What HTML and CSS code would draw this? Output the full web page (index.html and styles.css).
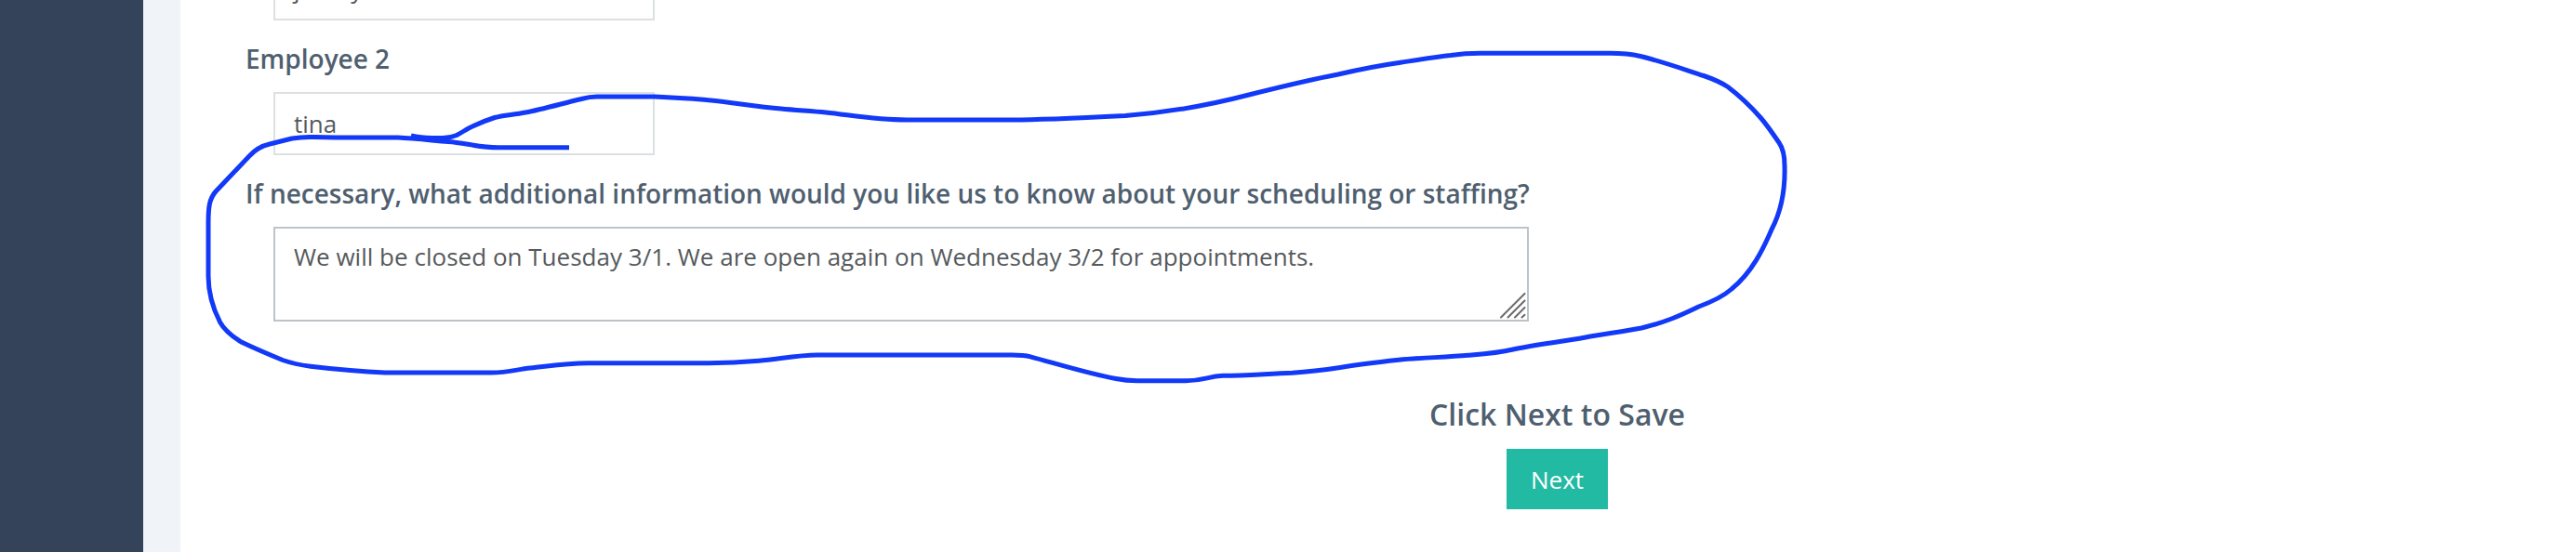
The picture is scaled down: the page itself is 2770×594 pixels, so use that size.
FILE: index.html
```html
<!DOCTYPE html>
<html lang="en">
<head>
<meta charset="utf-8">
<title>Scheduling and staffing</title>
<link rel="stylesheet" href="styles.css">
</head>
<body>
<div class="app">
  <aside class="sidebar"></aside>
  <main class="content">
    <form class="form">
      <div class="field">
        <div class="input">jimmy</div>
      </div>
      <div class="field">
        <label class="label">Employee 2</label>
        <div class="input">tina</div>
      </div>
      <div class="field">
        <label class="label">If necessary, what additional information would you like us to know about your scheduling or staffing?</label>
        <div class="textarea">We will be closed on Tuesday 3/1. We are open again on Wednesday 3/2 for appointments.
          <svg class="grip" viewBox="0 0 28 28"><path d="M1 26.5 26.5 1M8.5 26.5 26.5 8.5M16 26.5 26.5 16M23.5 26.5 26.5 23.8"/></svg>
        </div>
      </div>
    </form>
    <div class="actions">
      <h2 class="hint">Click Next to Save</h2>
      <button class="next" type="button">Next</button>
    </div>
  </main>
</div>
<svg class="ink" viewBox="0 0 2770 594">
  <path d="M442 146C450 148 457 148.500 465 148.500H476Q484 148.500 491 145.500C497 142.500 500 140 504 138C516 132 524 129 532 126.500C541 124 552 123.500 565 121C582 118 604 111.500 625 106.500Q634 104 642 104H704L740 106C772 107.500 806 114 840 117C856 118.500 872 119.500 888 121C916 124 942 129 975 129H1090C1120 129 1180 126 1210 124.500C1250 121.500 1297 114 1343 102C1375 94 1407 86 1439 80C1461 75 1480 71 1506 67.300C1524 64.500 1542 61.500 1560 59.500Q1575 57.300 1592 57.300H1731Q1750 57.300 1764 60.500C1787 66 1812 75 1832 81.500Q1848 87 1858 93.500C1873 105 1884 116 1893.500 127C1902 137 1907 145 1913 153.500Q1919 162 1919 178C1920 210 1914 230 1905 247C1896 268 1884 293 1862 311C1853 319 1840 325 1826.600 330C1806 340 1790 347 1765 353C1745 357 1722 359.500 1705 363C1678 368 1650 371 1627 376C1610 380 1595 381 1579 382.300C1554 384.500 1526 385 1504 387.300C1484 389.500 1462 392 1441 395.500C1424 398 1408 400 1389.600 401.300C1365 402 1340 404.300 1315 404.300C1298 405 1296 409.700 1275 409.700H1223Q1211 409.700 1200 407.500C1170 402 1135 391 1108 383.800Q1101 382 1088 382H879C858 382 837 386.500 816 388.300C796 390 777 390.700 758 390.700H632C607 391 590 394 570 396C556 397.500 546 401 528 401H414C388 400 361 397.500 334 394.300Q317 392 304 387.500C288 381 274 375 260 368.300Q243 358 236.600 346.700C228 330 224 312 224 297V240C224 223 225 214 232 206L268 168Q277 158 290 155L314 149Q325 147 338 147.500L361 148H428C447 149 464 151 482 152.500C500 153.500 513 158.700 536 158.700H612"/>
</svg>
</body>
</html>
```

FILE: styles.css
```css
* { box-sizing: border-box; }

body {
  margin: 0;
  background: #fff;
  font-family: "Open Sans", "Noto Sans", sans-serif;
  overflow: hidden;
}

.app {
  display: flex;
  height: 594px;
  overflow: hidden;
}

.sidebar {
  flex: none;
  width: 194px;
  background: #34425a;
  border-right: 40px solid #f0f4f9;
}

.content {
  flex: 1;
  padding: 0 40px 0 70px;
}

.form {
  margin-top: -46px;
}

.label {
  display: block;
  height: 77px;
  padding-top: 22px;
  font-size: 28px;
  line-height: 38px;
  font-weight: 600;
  letter-spacing: -0.008px;
  color: #4f5f6f;
  white-space: nowrap;
}

.input,
.textarea {
  margin-left: 30px;
  padding: 0 20px;
  color: #55595c;
  font-size: 26px;
  letter-spacing: 0.02px;
  background: #fff;
}

.input {
  width: 410px;
  height: 68px;
  border: 2px solid #dce0e3;
  line-height: 65px;
}

.textarea {
  position: relative;
  width: 1350px;
  height: 102px;
  padding-top: 12px;
  border: 2px solid #bdc3c7;
  line-height: 36px;
}

.grip {
  position: absolute;
  right: 1px;
  bottom: 1px;
  width: 28px;
  height: 28px;
  fill: none;
  stroke: #6b6b6b;
  stroke-width: 2;
  stroke-linecap: round;
}

.actions {
  display: flex;
  flex-direction: column;
  align-items: center;
  width: 2821px;
  padding-top: 78px;
}

.hint {
  margin: 0;
  height: 59px;
  font-size: 32px;
  line-height: 44px;
  font-weight: 600;
  color: #4f5f6f;
}

.next {
  width: 109px;
  height: 65px;
  padding: 0;
  border: 0;
  background: #23baa3;
  color: #fff;
  font: 26px/67px "Open Sans", "Noto Sans", sans-serif;
}

/* Freehand annotation drawn over the form */
.ink {
  position: absolute;
  top: 0;
  left: 0;
  width: 2770px;
  height: 594px;
  fill: none;
  stroke: #1239f8;
  stroke-width: 5;
  stroke-linejoin: round;
  pointer-events: none;
}
```
